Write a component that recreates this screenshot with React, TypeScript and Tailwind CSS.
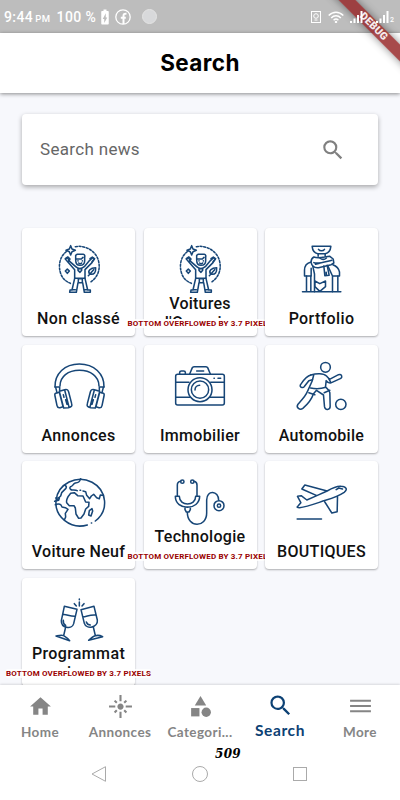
import type { ReactNode } from 'react'
import { MdBatteryChargingFull, MdCategory, MdDehaze, MdFlare, MdHome, MdSearch } from 'react-icons/md'

// Category icons
function Icon({ viewBox, children }: { viewBox: string; children: ReactNode }) {
  return (
    <svg
      viewBox={viewBox}
      className="h-[50px] w-[50px] shrink-0 overflow-visible"
      fill="none"
      stroke="#174677"
      strokeWidth="4.6"
      strokeLinecap="round"
      strokeLinejoin="round"
    >
      {children}
    </svg>
  )
}

function PersonIcon() {
  return (
    <Icon viewBox="114 72 150 150">
      <path d="M178 80C206 75 234 90 245 115C256 144 247 172 221 188M151 95C133 108 126 134 133 157C137 172 146 183 163 190" strokeDasharray="6 5" />
      <path d="M164 77l4 10 10 4-10 4-4 10-4-10-10-4 10-4zM154 147l6 6-6 7-6-7z" />
      <path d="M179 119v-13l4-3h19c4 0 5 5 4 9v10c0 9-6 14-14 14s-13-7-13-17zM180 117h16l5-5" />
      <path d="M186 122v1M199 122v1M188 129c3 3 7 3 9 0" />
      <path d="M179 140l-18-16-7-12-6 5 7 8 21 24v26h31v-26l21-21 8-12-6-3-9 8-16 19c-9 7-18 7-26 0z" />
      <path d="M148 116l8-5 6 6-5 7M222 116l7-5 6 6-7 8" />
      <path d="M186 146h11v5l-5 6-6-6zM176 175l-8 35h-6l-1 7h20l5-29h14l5 29h18v-7h-8l-8-35M187 188v-12h12v12M168 209h10M205 209h10" />
      <path d="M221 162c-7-8 2-19 18-19 1 13-4 23-18 19zM217 167l16-18" />
    </Icon>
  )
}

function ScarfIcon() {
  return (
    <Icon viewBox="109.5 72 150 150">
      <path d="M155 79h56c-1 12-7 20-17 22h-22c-10-2-16-10-17-22zM174 88c4 6 14 6 18 0" />
      <path d="M173 102v7M194 102v7M160 111c15 6 32-1 48-2l10 8 2 12-8 5-38 9c-11 1-20-4-22-15-1-8 3-14 8-17z" />
      <path d="M160 128c10 5 32-2 54-7M165 133l16-4M178 114c6 5 14 5 20 0M190 138l3 29 13-1-6-30M197 157l1 9" />
      <path d="M152 126c-13 3-20 13-20 25v17h20M217 134c11 4 18 11 20 22v12h-21M157 139l5 23v53M203 140l13 28v47M152 145v23" />
      <path d="M126 215h115M138 168v47M151 169v46M232 168v47M163 183l15 8 17-8v17l-17 14-15-14z" />
    </Icon>
  )
}

function HeadphonesIcon() {
  return (
    <Icon viewBox="114 63 150 150">
      <path d="M117 141c-1-40 29-69 73-69s75 29 74 69M132 138c0-28 24-47 58-47s59 19 59 47" />
      <path d="M117 141h14v10M264 141h-14v10M119 142l4 16M262 142l-4 16" />
      <path d="M119 160l11-3 11 43-9 3c-5 1-8-1-9-6l-6-29c-1-4-1-7 2-8zM130 154l16-5c7-2 10 0 12 7l9 35c2 7 0 10-10 12l-14 1zM146 150l13 51M142 164l2 8M149 179l4 14" />
      <path d="M262 160l-11-3-11 43 9 3c5 1 8-1 9-6l6-29c1-4 1-7-2-8zM251 154l-16-5c-7-2-10 0-12 7l-9 35c-2 7 0 10 10 12l14 1zM235 150l-13 51M239 164l-2 8M232 179l-4 14" />
    </Icon>
  )
}

function CameraIcon() {
  return (
    <Icon viewBox="481 63 150 150">
      <path d="M483 109q0-6 6-6h134q6 0 6 6v80q0 6-6 6H489q-6 0-6-6zM483 127h40M588 127h41M483 172h43M585 172h44" />
      <path d="M525 102l8-19q1-3 5-3h36q4 0 5 3l8 19M546 93h21M495 102v-5q0-4 5-4h7q5 0 5 4v5M598 115h1M610 115h8" />
      <circle cx="556" cy="149" r="36" />
      <circle cx="556" cy="149" r="26" />
      <path d="M541 150c0-8 6-14 14-14" />
    </Icon>
  )
}

function FootballIcon() {
  return (
    <Icon viewBox="469.5 63 150 150">
      <circle cx="555" cy="82" r="14.500" />
      <circle cx="601" cy="193" r="15.500" />
      <path d="M511 105c16-5 38-6 47 3l9 10 27-14c9-3 13 6 7 11l-28 13c-6 3-12-1-16-6l-2 19c5 5 11 8 13 17l1 41c0 12-15 13-17 1l-3-35-21-14-9 10c-6 18-17 31-32 44-9 7-21-2-15-12 13-14 24-25 29-39l14-31 5-19" />
      <path d="M511 105c-16 5-23 18-31 29-4 8 7 12 12 5l13-17 11-3M510 144c15 3 30 3 46-2M505 158l18 6M551 158l17-7M565 116l6 12" />
    </Icon>
  )
}

function GlobeIcon() {
  return (
    <Icon viewBox="116 67 150 150">
      <path d="M216 211a73 70 0 1 1 24-12M228 205h1" />
      <path d="M196 72c-3 11-7 13-16 13-8 3-6 9-14 11-7 5 3 11 6 10 7-1 10 2 14 2M194 107h2M203 109l8 2 3 11 9 10 5-8 7-5 9 10 8 3 3-11 7 1" />
      <path d="M158 126l8-10 11-2 10 9 16 1 8 18 10 1-1 12-9 8-5 15-9 12-7 1-8-13-2-18-4-7h-14l-8-9c-2-8 2-12 4-18z" />
      <path d="M148 92c6 2 6 6 3 10l-12 12-3 10-11 10M121 130l11 1-2 6-12 3M120 150c7-2 11-5 17 1l3 6 10 2 8 5-8 12 1 11-4 9" />
      <path d="M220 181l2-13 8-6 2 7-5 15z" />
    </Icon>
  )
}

function StethoscopeIcon() {
  return (
    <Icon viewBox="106 67 150 150">
      <circle cx="128" cy="81" r="5" />
      <circle cx="158" cy="81" r="5" />
      <path d="M123 80c-7 1-10 5-10 11v33M163 80c6 1 9 5 9 11v33" />
      <path d="M107 125h12c0 31 49 31 49 0h12c0 43-73 45-73 0zM136 157h16v8l-4 7h-8l-4-7zM143 173c0 48 58 47 58 2v-39c0-32 36-29 36 1" />
      <circle cx="238" cy="153" r="15" />
      <circle cx="238" cy="153" r="5" />
    </Icon>
  )
}

function PlaneIcon() {
  return (
    <Icon viewBox="469.5 67 150 150">
      <path d="M470 193h73M472 155l9-11-10-19 11-2 17 13 30-13-45-20 9-12 67 18c14-8 28-16 42-14 15 1 21 9 9 18-15 10-37 18-56 24-28 9-56 20-78 22-7 0-9-2-5-4zM529 123l31-14M553 142l21 33 16-4 1-44M587 105l8-5 11 3" />
    </Icon>
  )
}

function GlassesIcon() {
  return (
    <Icon viewBox="160 72 150 150">
      <path d="M191 109l38 9-10 43c-5 19-38 13-37-9zM187 134c10-2 20 6 37 5M188 151c-1 7 2 12 7 15M195 171l-6 26M166 198c10-2 17-4 23-1 8 5 13 9 18 15zM241 119l39-10 10 41c3 22-33 30-39 10zM246 141c13-1 22-8 39-6M257 156c2 6 7 9 12 9M278 171l6 26M264 211c5-5 12-12 20-14 8-2 16 0 22 3zM236 87v2M236 96v12M221 101l6 7M250 101l-6 7" />
    </Icon>
  )
}

const categories = [
  { name: 'Non classé', icon: <PersonIcon />, spacing: 'tracking-[0.35px]' },
  { name: "Voitures d'Occasion", icon: <PersonIcon />, spacing: 'tracking-[0.2px]', overflow: true },
  { name: 'Portfolio', icon: <ScarfIcon />, spacing: 'tracking-[0.35px]' },
  { name: 'Annonces', icon: <HeadphonesIcon />, spacing: 'tracking-[0.35px]' },
  { name: 'Immobilier', icon: <CameraIcon />, spacing: 'tracking-[0.3px]' },
  { name: 'Automobile', icon: <FootballIcon />, spacing: 'tracking-[0.3px]' },
  { name: 'Voiture Neuf', icon: <GlobeIcon />, spacing: 'tracking-[0.3px]' },
  { name: 'Technologie', icon: <StethoscopeIcon />, spacing: 'tracking-[0.3px]', overflow: true },
  { name: 'BOUTIQUES', icon: <PlaneIcon />, spacing: 'tracking-[0.3px]' },
  { name: 'Programmat ion', icon: <GlassesIcon />, spacing: 'tracking-[0.35px]', overflow: true },
]

const tabs = [
  { name: 'Home', icon: MdHome },
  { name: 'Annonces', icon: MdFlare },
  { name: 'Categori...', icon: MdCategory },
  { name: 'Search', icon: MdSearch, active: true },
  { name: 'More', icon: MdDehaze },
]

function StatusBar() {
  return (
    <div className="flex h-[33px] shrink-0 items-center bg-[#bdbdbd] pl-1 font-medium text-white">
      <span className="mt-[2px] text-[14px] tracking-[0.4px]">9:44</span>
      <span className="ml-[2px] mt-[5px] text-[9.5px] tracking-[0.5px]">PM</span>
      <span className="ml-[6px] mt-[2px] text-[14px] tracking-[0.4px]">100 %</span>
      <MdBatteryChargingFull className="h-[18px] w-[18px]" />
      <svg className="ml-[1px] h-4 w-4" viewBox="0 0 16 16" fill="none" stroke="white">
        <circle cx="8" cy="8" r="7.200" strokeWidth="1.300" />
        <path d="M8.500 15V7c0-2 .8-2.500 3-2.300M5.800 8.700h5" strokeWidth="2" />
      </svg>
      <span className="ml-[11px] h-[15px] w-[15px] rounded-full border border-[#e4e4e4] bg-[#d8d9db]" />
      <div className="relative z-20 ml-auto flex items-center pr-[6px]">
        <svg className="h-3 w-[10px]" viewBox="0 0 10 12" fill="none" stroke="white">
          <rect x=".5" y=".5" width="9" height="11" />
          <circle cx="5" cy="5" r="2.300" />
          <path d="M3.500 9h3" />
        </svg>
        <svg className="ml-[7px] h-3 w-4" viewBox="0 0 16 12" fill="none" stroke="white" strokeWidth="1.500">
          <path d="M.7 4.500c4.300-4.500 10.300-4.500 14.600 0M3.200 7c2.800-3 6.800-3 9.600 0M5.600 9.200c1.500-1.500 3.300-1.500 4.800 0" />
          <circle cx="8" cy="11" r=".5" />
        </svg>
        <svg className="ml-[6px] h-3 w-[13px]" viewBox="0 0 13 12" fill="white">
          <path d="M0 10h2v2H0zM3.500 7.500h2V12h-2zM7 4h2v8H7zM10.500 0h2v12h-2z" />
        </svg>
        <svg className="ml-[13px] h-3 w-[13px]" viewBox="0 0 13 12" fill="white">
          <path d="M0 10h2v2H0zM3.500 7.500h2V12h-2zM7 4h2v8H7zM10.500 0h2v12h-2z" />
        </svg>
        <span className="ml-[1px] mt-2 text-[7px] leading-none">2</span>
      </div>
    </div>
  )
}

export default function App() {
  return (
    <div className="relative flex h-[800px] w-[400px] flex-col overflow-hidden bg-[#f7f8fc] font-[Roboto,sans-serif]">
      <StatusBar />

      <header className="relative flex h-[60px] shrink-0 items-center justify-center bg-white shadow-[0_1px_4px_rgba(0,0,0,0.45)]">
        <h1 className="font-[Inter,sans-serif] text-[22.5px] font-bold tracking-[0.4px] text-black">Search</h1>
      </header>

      {/* Debug ribbon */}
      <div className="absolute left-[313px] top-[20px] z-10 flex h-3 w-[120px] rotate-45 items-center justify-center bg-[#982a2c]/85 pl-[2px] text-[10.5px] font-black tracking-[0.2px] text-white/90 shadow-[0_0_8px_rgba(0,0,0,0.45)]">
        DEBUG
      </div>

      <main className="h-[592px] shrink-0 overflow-hidden px-[22px] pt-[21px]">
        <div className="flex h-[71px] items-center justify-between rounded-[4px] bg-white pl-[18px] pr-[32px] shadow-[0_2px_5px_rgba(0,0,0,0.33)]">
          <span className="text-[17px] tracking-[0.32px] text-[#666]">Search news</span>
          <MdSearch className="h-[26px] w-[26px] text-[#808080]" />
        </div>

        <div className="mt-[43px] grid grid-cols-[113px_113px_113px] gap-x-[8.5px] gap-y-[8.6px]">
          {categories.map((category) => (
            <div
              key={category.name}
              className="relative flex h-[108px] flex-col items-center rounded-[4px] bg-white pt-4 shadow-[0_1px_2px_rgba(0,0,0,0.3)]"
            >
              {category.icon}
              <div
                className={
                  category.overflow
                    ? 'h-[25px] w-[100px] overflow-hidden text-center text-[16px] font-medium leading-[19px] text-[#111]'
                    : 'mt-[15px] text-center text-[16px] font-medium leading-[19px] text-[#111]'
                }
              >
                <span className={category.spacing}>{category.name}</span>
              </div>
              {category.overflow && (
                <div className="absolute bottom-[8px] left-1/2 -translate-x-1/2 whitespace-nowrap bg-white/80 text-[8px] font-bold leading-[9px] tracking-[0.18px] text-[#900]">
                  BOTTOM OVERFLOWED BY 3.7 PIXELS
                </div>
              )}
            </div>
          ))}
        </div>
      </main>

      <nav className="relative h-[115px] shrink-0 bg-white shadow-[0_-1px_2px_rgba(0,0,0,0.12)]">
        <div className="grid h-[60px] grid-cols-5 font-[Lato,sans-serif] font-bold">
          {tabs.map((tab) => (
            <div
              key={tab.name}
              className={
                tab.active
                  ? 'flex flex-col items-center pt-[7px] text-[15.5px] tracking-[0.6px] text-[#0c4174]'
                  : 'flex flex-col items-center pt-[9px] text-[13.5px] tracking-[0.4px] text-[#858585]'
              }
            >
              <tab.icon className={tab.active ? 'h-[27px] w-[27px]' : 'h-[25px] w-[25px]'} />
              <span className={tab.active ? 'mt-px leading-5' : 'mt-[3px] leading-5'}>{tab.name}</span>
            </div>
          ))}
        </div>
        <span className="absolute left-[215px] top-[60px] font-[DejaVu_Serif,serif] text-[12px] font-bold italic leading-[18px] tracking-[0.3px] text-black">
          509
        </span>
        <div className="flex h-[55px] items-center justify-center gap-[85px] pr-[2px] pt-[3px]">
          <svg className="h-4 w-4" viewBox="0 0 16 16" fill="none" stroke="#aaa">
            <path d="M14.500 .7v14.600L1 8z" />
          </svg>
          <span className="h-4 w-4 rounded-full border border-[#aaa]" />
          <span className="h-[14px] w-[14px] border border-[#aaa]" />
        </div>
      </nav>
    </div>
  )
}
